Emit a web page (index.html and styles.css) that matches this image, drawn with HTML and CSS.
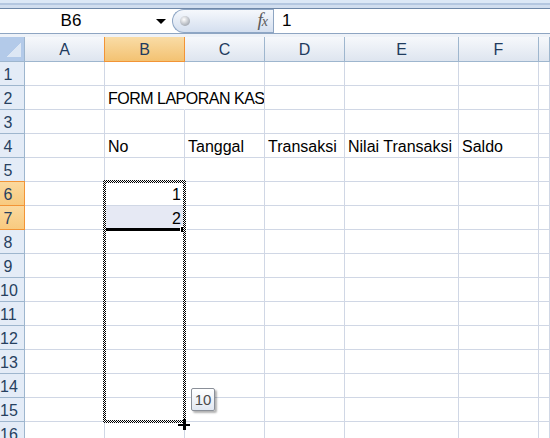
FILE: index.html
```html
<!DOCTYPE html>
<html>
<head>
<meta charset="utf-8">
<link rel="stylesheet" href="styles.css">
</head>
<body>
<div class="app">
  <div class="ribbon-edge"></div>
  <div class="formula-bar">
    <div class="namebox"><span class="nb-text">B6</span><span class="nb-arrow"></span></div>
    <div class="fx-pill"><span class="knob"></span><span class="fx"><i>f</i><span class="fx-x">x</span></span></div>
    <div class="formula">1</div>
  </div>
  <div class="gap"></div>
  <div class="sheet">
    <div class="corner"></div><div class="ch">A</div><div class="ch sel">B</div><div class="ch">C</div><div class="ch">D</div><div class="ch">E</div><div class="ch">F</div><div class="ch"></div>

    <div class="rh">1</div><div class="c"></div><div class="c"></div><div class="c"></div><div class="c"></div><div class="c"></div><div class="c"></div><div class="c"></div>
    <div class="rh">2</div><div class="c"></div><div class="c title">FORM LAPORAN KAS</div><div class="c"></div><div class="c"></div><div class="c"></div><div class="c"></div><div class="c"></div>
    <div class="rh">3</div><div class="c"></div><div class="c"></div><div class="c"></div><div class="c"></div><div class="c"></div><div class="c"></div><div class="c"></div>
    <div class="rh">4</div><div class="c"></div><div class="c">No</div><div class="c">Tanggal</div><div class="c">Transaksi</div><div class="c">Nilai Transaksi</div><div class="c">Saldo</div><div class="c"></div>
    <div class="rh">5</div><div class="c"></div><div class="c"></div><div class="c"></div><div class="c"></div><div class="c"></div><div class="c"></div><div class="c"></div>
    <div class="rh sel">6</div><div class="c"></div><div class="c num">1</div><div class="c"></div><div class="c"></div><div class="c"></div><div class="c"></div><div class="c"></div>
    <div class="rh sel">7</div><div class="c"></div><div class="c num hl">2</div><div class="c"></div><div class="c"></div><div class="c"></div><div class="c"></div><div class="c"></div>
    <div class="rh">8</div><div class="c"></div><div class="c"></div><div class="c"></div><div class="c"></div><div class="c"></div><div class="c"></div><div class="c"></div>
    <div class="rh">9</div><div class="c"></div><div class="c"></div><div class="c"></div><div class="c"></div><div class="c"></div><div class="c"></div><div class="c"></div>
    <div class="rh">10</div><div class="c"></div><div class="c"></div><div class="c"></div><div class="c"></div><div class="c"></div><div class="c"></div><div class="c"></div>
    <div class="rh">11</div><div class="c"></div><div class="c"></div><div class="c"></div><div class="c"></div><div class="c"></div><div class="c"></div><div class="c"></div>
    <div class="rh">12</div><div class="c"></div><div class="c"></div><div class="c"></div><div class="c"></div><div class="c"></div><div class="c"></div><div class="c"></div>
    <div class="rh">13</div><div class="c"></div><div class="c"></div><div class="c"></div><div class="c"></div><div class="c"></div><div class="c"></div><div class="c"></div>
    <div class="rh">14</div><div class="c"></div><div class="c"></div><div class="c"></div><div class="c"></div><div class="c"></div><div class="c"></div><div class="c"></div>
    <div class="rh">15</div><div class="c"></div><div class="c"></div><div class="c"></div><div class="c"></div><div class="c"></div><div class="c"></div><div class="c"></div>
    <div class="rh">16</div><div class="c"></div><div class="c"></div><div class="c"></div><div class="c"></div><div class="c"></div><div class="c"></div><div class="c"></div>

    <div class="sel-bottom"></div>
    <div class="handle"></div>
    <div class="marquee"><div class="m m-t"></div><div class="m m-b"></div><div class="m m-l"></div><div class="m m-r"></div></div>
    <div class="tip">10</div>
    <div class="cursor"></div>
  </div>
</div>
</body>
</html>
```

FILE: styles.css
```css
* { box-sizing: border-box; margin: 0; padding: 0; }
html, body { width: 550px; height: 438px; overflow: hidden; background: #fff; }
body { font-family: "Liberation Sans", Arial, sans-serif; font-size: 16px; color: #000; }

.app { width: 550px; height: 438px; overflow: hidden; }

.ribbon-edge {
  height: 9px;
  background: linear-gradient(#dce8f6 0 3px, #b4c7e0 3px 5px, #d1deef 5px 8px);
  border-bottom: 1px solid #6f88a8;
}

.formula-bar {
  display: flex;
  height: 25px;
  background: #fff;
  border-bottom: 1px solid #8ea5c2;
}
.namebox { width: 172px; display: flex; align-items: center; }
.nb-text { flex: 1; text-align: center; line-height: 24px; padding-right: 14px; font-size: 17px; }
.nb-arrow {
  width: 0; height: 0; margin-right: 6px;
  border-left: 5px solid transparent; border-right: 5px solid transparent;
  border-top: 5px solid #000;
}
.fx-pill {
  width: 101px;
  display: flex; align-items: center; justify-content: space-between;
  padding: 0 5px 0 7px;
  border: 1px solid #8ea6c5; border-right: none;
  border-radius: 12px 0 0 12px;
  background: linear-gradient(#f5f8fc, #d4dfef);
}
.knob {
  width: 10px; height: 10px; border-radius: 50%;
  background: radial-gradient(circle at 40% 35%, #ffffff, #b0b5bd 65%, #868c95);
}
.fx { font-family: "Liberation Serif", "Times New Roman", serif; color: #5b5b5b; font-size: 19px; line-height: 20px; }
.fx i { font-style: italic; }
.fx-x { font-style: italic; font-size: 14px; margin-left: -1px; }
.formula { flex: 1; border-left: 1px solid #8ea5c2; padding-left: 8px; line-height: 24px; font-size: 17px; }

.gap { height: 3px; background: #eef2f8; }

.sheet {
  position: relative;
  display: grid;
  grid-template-columns: 25px 80px 80px 80px 80px 114px 80px 1fr;
  grid-template-rows: 25px repeat(16, 24px);
}

.corner {
  border-right: 1px solid #9eb6ce; border-bottom: 1px solid #9eb6ce;
  background: linear-gradient(135deg, transparent 50%, #dde7f4 50%) no-repeat right 3px bottom 4px / 14px 14px, #b3cae9;
}
.ch {
  border-right: 1px solid #9eb6ce; border-bottom: 1px solid #9eb6ce;
  background: linear-gradient(#f6f8fb, #dee5ef);
  text-align: center; color: #1f3b5e;
  padding-top: 2px; line-height: 21px;
}
.ch.sel {
  background: linear-gradient(#f9dca6, #f3c272);
  border-color: #f29436;
  box-shadow: -1px 0 0 #f29436;
}
.rh {
  border-right: 1px solid #9eb6ce; border-bottom: 1px solid #9eb6ce;
  background: #e4ecf7;
  color: #27415f;
  text-align: center;
  padding: 2px 8px 0 0; line-height: 21px;
  white-space: nowrap;
}
.rh.sel {
  background: linear-gradient(#fbd99e, #f8ca7f);
  border-color: #f29436;
  box-shadow: 0 -1px 0 #f29436;
}
.c {
  border-right: 1px solid #d0d7e5; border-bottom: 1px solid #d0d7e5;
  padding: 2px 3px 0; line-height: 21px;
  white-space: nowrap;
}
.c.title { border-right-color: transparent; letter-spacing: -0.5px; }
.c.num { text-align: right; padding-right: 3px; }
.c.hl { background: #e6e9f4; }

.sel-bottom { position: absolute; left: 105px; top: 191px; width: 77px; height: 3px; background: #000; }
.handle { position: absolute; left: 180px; top: 189px; width: 7px; height: 7px; background: #000; border: 1px solid #fff; }

.marquee { position: absolute; left: 103px; top: 143px; width: 83px; height: 243px; }
.m {
  position: absolute;
  background-image: conic-gradient(#000 25%, #fff 0 50%, #000 0 75%, #fff 0);
  background-size: 2px 2px;
}
.m-t { left: 0; top: 0; width: 100%; height: 3px; }
.m-b { left: 0; bottom: 0; width: 100%; height: 3px; }
.m-l { left: 0; top: 0; width: 3px; height: 100%; }
.m-r { right: 0; top: 0; width: 3px; height: 100%; }

.tip {
  position: absolute; left: 191px; top: 351px; width: 24px; height: 23px;
  border: 1px solid #8a8f98; border-radius: 2px;
  background: linear-gradient(#ffffff, #e1e7f1);
  box-shadow: 2px 2px 2px rgba(0,0,0,.3);
  font-size: 15px; color: #4a4a4a; text-align: center; line-height: 21px;
}

.cursor { position: absolute; left: 178px; top: 382px; width: 12px; height: 11px; }
.cursor::before { content: ""; position: absolute; left: 0; top: 5px; width: 12px; height: 2px; background: #000; }
.cursor::after { content: ""; position: absolute; left: 5px; top: 0; width: 3px; height: 11px; background: #000; }
```
